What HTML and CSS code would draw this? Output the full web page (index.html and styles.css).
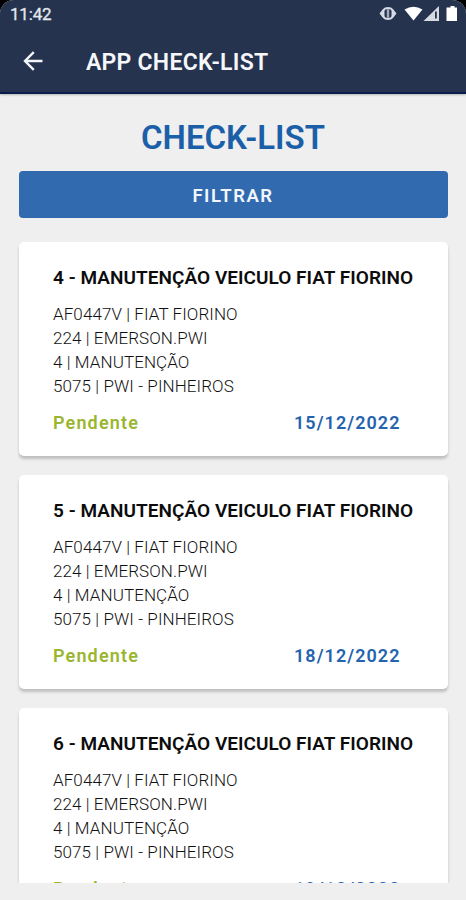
FILE: index.html
```html
<!DOCTYPE html>
<html lang="pt-BR">
<head>
<meta charset="utf-8">
<meta name="viewport" content="width=device-width">
<title>App Check-list</title>
<link rel="stylesheet" href="styles.css">
</head>
<body>
<div class="screen">
  <header class="top">
    <div class="status">
      <span class="clock">11:42</span>
      <svg class="status-icons" width="80" height="18" viewBox="0 0 80 18">
        <path d="M0.500 8.500 4 4Q5.500 2 9 2T14 4L17.500 8.500 14 13Q12.500 15 9 15T4 13Z" fill="#d4d9e2"/>
        <rect x="5.500" y="4.300" width="7" height="8.400" rx="2" fill="#25334f"/>
        <rect x="7.800" y="4.300" width="2.400" height="8.400" fill="#a4acbb"/>
        <path d="M25.500 4.500Q34.500-1 43.500 4.500L34.500 15.500Z" fill="#fff"/>
        <path d="M60 1V16H44.500Z" fill="#d5d9e1"/>
        <path d="M56 6.500h1.800v7H56Z" fill="#25334f"/>
        <path d="M69 2.500h2.500V1h4v1.500H78V16H67.500V2.500Z" fill="#fff"/>
      </svg>
    </div>
    <div class="appbar">
      <svg class="back" width="20" height="20" viewBox="0 0 20 20" fill="none" stroke="#f2f4f8" stroke-width="2.400"><path d="M19.500 10H2M10.800 1.200 2 10l8.800 8.800"/></svg>
      <span class="app-name">APP CHECK-LIST</span>
    </div>
  </header>
  <main class="content">
    <h1 class="heading">CHECK-LIST</h1>
    <button class="filter">FILTRAR</button>
    <section class="list">
      <article class="card">
        <h2 class="card-title">4 - MANUTENÇÃO VEICULO FIAT FIORINO</h2>
        <div class="meta"><p>AF0447V | FIAT FIORINO</p><p>224 | EMERSON.PWI</p><p>4 | MANUTENÇÃO</p><p>5075 | PWI - PINHEIROS</p></div>
        <div class="foot"><span class="state">Pendente</span><span class="date">15/12/2022</span></div>
      </article>
      <article class="card">
        <h2 class="card-title">5 - MANUTENÇÃO VEICULO FIAT FIORINO</h2>
        <div class="meta"><p>AF0447V | FIAT FIORINO</p><p>224 | EMERSON.PWI</p><p>4 | MANUTENÇÃO</p><p>5075 | PWI - PINHEIROS</p></div>
        <div class="foot"><span class="state">Pendente</span><span class="date">18/12/2022</span></div>
      </article>
      <article class="card">
        <h2 class="card-title">6 - MANUTENÇÃO VEICULO FIAT FIORINO</h2>
        <div class="meta"><p>AF0447V | FIAT FIORINO</p><p>224 | EMERSON.PWI</p><p>4 | MANUTENÇÃO</p><p>5075 | PWI - PINHEIROS</p></div>
        <div class="foot"><span class="state">Pendente</span><span class="date">19/12/2022</span></div>
      </article>
    </section>
  </main>
</div>
</body>
</html>
```
FILE: styles.css
```css
* { box-sizing: border-box; margin: 0; padding: 0; }
body { background: #000; font-family: Roboto, "Liberation Sans", sans-serif; }
.screen { height: 900px; overflow: hidden; background: #efefef; border-radius: 14px 14px 0 0; display: flex; flex-direction: column; }
.top { height: 94px; flex: none; background: #25334f; border-bottom: 2px solid #0b1b4a; box-shadow: 0 1px 2px rgba(0,0,0,.25); }
.status { height: 30px; display: flex; justify-content: space-between; padding: 5px 7px 0 10px; }
.clock { font-size: 17px; line-height: 19px; letter-spacing: -.2px; -webkit-text-stroke: .3px #e4e7ee; color: #e4e7ee; }
.appbar { height: 64px; display: flex; align-items: center; padding-left: 23px; gap: 43px; }
.back { margin-top: -2px; }
.app-name { font-size: 23px; font-weight: 600; line-height: 28px; letter-spacing: .25px; color: #f5f7fa; white-space: nowrap; padding-top: 1px; }
.content { height: 789px; padding: 22px 18.500px 0; overflow: hidden; }
.heading { font-size: 33px; font-weight: 600; line-height: 44px; color: #1b5fa9; text-align: center; }
.filter { display: block; width: 100%; height: 47px; margin-top: 11px; border: 0; border-radius: 4px; background: #316aae; color: #f2f7fd; font: 600 18.500px/49px Roboto, sans-serif; letter-spacing: 1.500px; padding-top: 1px; }
.list { display: flex; flex-direction: column; gap: 19px; margin-top: 24px; }
.card { height: 214px; flex: none; background: #fff; border-radius: 5px; padding: 24px 47px 0 34.500px; box-shadow: 0 3px 3px rgba(0,0,0,.2); }
.card-title { font-size: 19px; font-weight: 600; line-height: 24px; letter-spacing: .04px; color: #0c0c0c; white-space: nowrap; }
.meta { margin-top: 12px; font-size: 17px; font-weight: 300; line-height: 24px; letter-spacing: .09px; color: #111; }
.foot { display: flex; justify-content: space-between; margin-top: 13px; font-size: 18px; font-weight: 600; line-height: 24px; letter-spacing: 1.050px; }
.state { color: #9ab62f; letter-spacing: 1.150px; }
.date { color: #2463ae; }
```
